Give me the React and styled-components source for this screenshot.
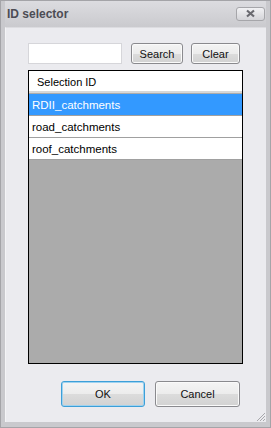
import React from 'react';
import styled, { createGlobalStyle } from 'styled-components';

const Global = createGlobalStyle`
  html, body { margin: 0; padding: 0; background: #ffffff; }
  * { box-sizing: border-box; }
`;

const Window = styled.div`
  width: 271px;
  height: 428px;
  display: flex;
  flex-direction: column;
  background: #c9c9cd;
  border: 1px solid #a4a4a8;
  padding: 0 4px 5px 4px;
  font-family: "Liberation Sans", Arial, sans-serif;
  font-size: 11px;
  color: #000;
`;

const TitleBar = styled.div`
  height: 26px;
  flex: none;
  display: flex;
  align-items: center;
  justify-content: space-between;
  padding: 0 1px 1px 2px;
  background: linear-gradient(#dcdce0, #cacace);
`;

const Title = styled.span`
  font-family: "Liberation Sans", Arial, sans-serif;
  font-weight: bold;
  font-size: 12px;
  color: #4c4c54;
`;

const CloseButton = styled.div`
  width: 29px;
  height: 14px;
  border: 1px solid #a6a6aa;
  border-radius: 3px;
  background: linear-gradient(#f2f2f4, #d4d4d8);
  display: flex;
  align-items: center;
  justify-content: center;
`;

const Content = styled.div`
  flex: 1;
  display: flex;
  flex-direction: column;
  background: #ebebef;
  border-left: 1px solid #f4f4f6;
  border-top: 1px solid #dcdce0;
  padding: 15px 0 0 22px;
  position: relative;
`;

const Toolbar = styled.div`
  display: flex;
  height: 21px;
`;

const SearchInput = styled.input`
  width: 94px;
  height: 21px;
  border: 1px solid #d6d6da;
  background: #fff;
  margin: 0 9px 0 0;
  padding: 0 3px;
  outline: none;
`;

const Button = styled.button`
  width: ${p => p.$w}px;
  height: ${p => p.$h || 21}px;
  margin-right: ${p => p.$mr || 0}px;
  padding: 0;
  font-family: "Liberation Sans", Arial, sans-serif;
  font-size: 11px;
  color: #111;
  border: 1px solid ${p => (p.$focus ? '#3c9fd8' : '#8a8a8e')};
  box-shadow: ${p => (p.$focus ? 'inset 0 0 0 1px #9fd2ef' : 'inset 0 0 0 1px #fafafa')};
  border-radius: 3px;
  background: linear-gradient(#f4f4f4 0%, #ececec 50%, #dcdcdc 51%, #d2d2d2 100%);
`;

const List = styled.div`
  margin-top: 6px;
  width: 215px;
  height: 294px;
  border: 1px solid #000;
  background: #ababab;
  display: flex;
  flex-direction: column;
`;

const Header = styled.div`
  height: 22px;
  background: #fff;
  border-bottom: 2px solid #d8d8d8;
  display: flex;
  align-items: center;
  padding-left: 8px;
  margin-bottom: 1px;
  border-top: 1px solid #fff;
`;

const Row = styled.div`
  height: 22px;
  display: flex;
  align-items: center;
  padding-left: 3px;
  background: ${p => (p.$selected ? '#3399ff' : '#ffffff')};
  color: ${p => (p.$selected ? '#ffffff' : '#000')};
  border-bottom: 1px solid #a0a0a0;
  font-size: 11.5px;
`;

const Footer = styled.div`
  display: flex;
  margin-top: 17px;
  padding-left: 33px;
`;

const Grip = styled.svg`
  position: absolute;
  right: 0;
  bottom: 0;
`;

const rows = ['RDII_catchments', 'road_catchments', 'roof_catchments'];

export default function App() {
  return (
    <>
      <Global />
      <Window>
        <TitleBar>
          <Title>ID selector</Title>
          <CloseButton>
            <svg width="11" height="9" viewBox="0 0 11 9">
              <path d="M2 1.5 L9 7.5 M9 1.5 L2 7.5" stroke="#6a6a70" strokeWidth="2.2" />
            </svg>
          </CloseButton>
        </TitleBar>
        <Content>
          <Toolbar>
            <SearchInput />
            <Button $w={52} $mr={8}>Search</Button>
            <Button $w={49}>Clear</Button>
          </Toolbar>
          <List>
            <Header>Selection ID</Header>
            {rows.map((r, i) => (
              <Row key={r} $selected={i === 0}>{r}</Row>
            ))}
          </List>
          <Footer>
            <Button $w={84} $h={26} $mr={10} $focus>OK</Button>
            <Button $w={85} $h={26}>Cancel</Button>
          </Footer>
          <Grip width="12" height="12" viewBox="0 0 12 12">
            <path d="M11 3 L3 11 M11 6 L6 11 M11 9 L9 11" stroke="#a8a8ac" strokeWidth="1" />
          </Grip>
        </Content>
      </Window>
    </>
  );
}
